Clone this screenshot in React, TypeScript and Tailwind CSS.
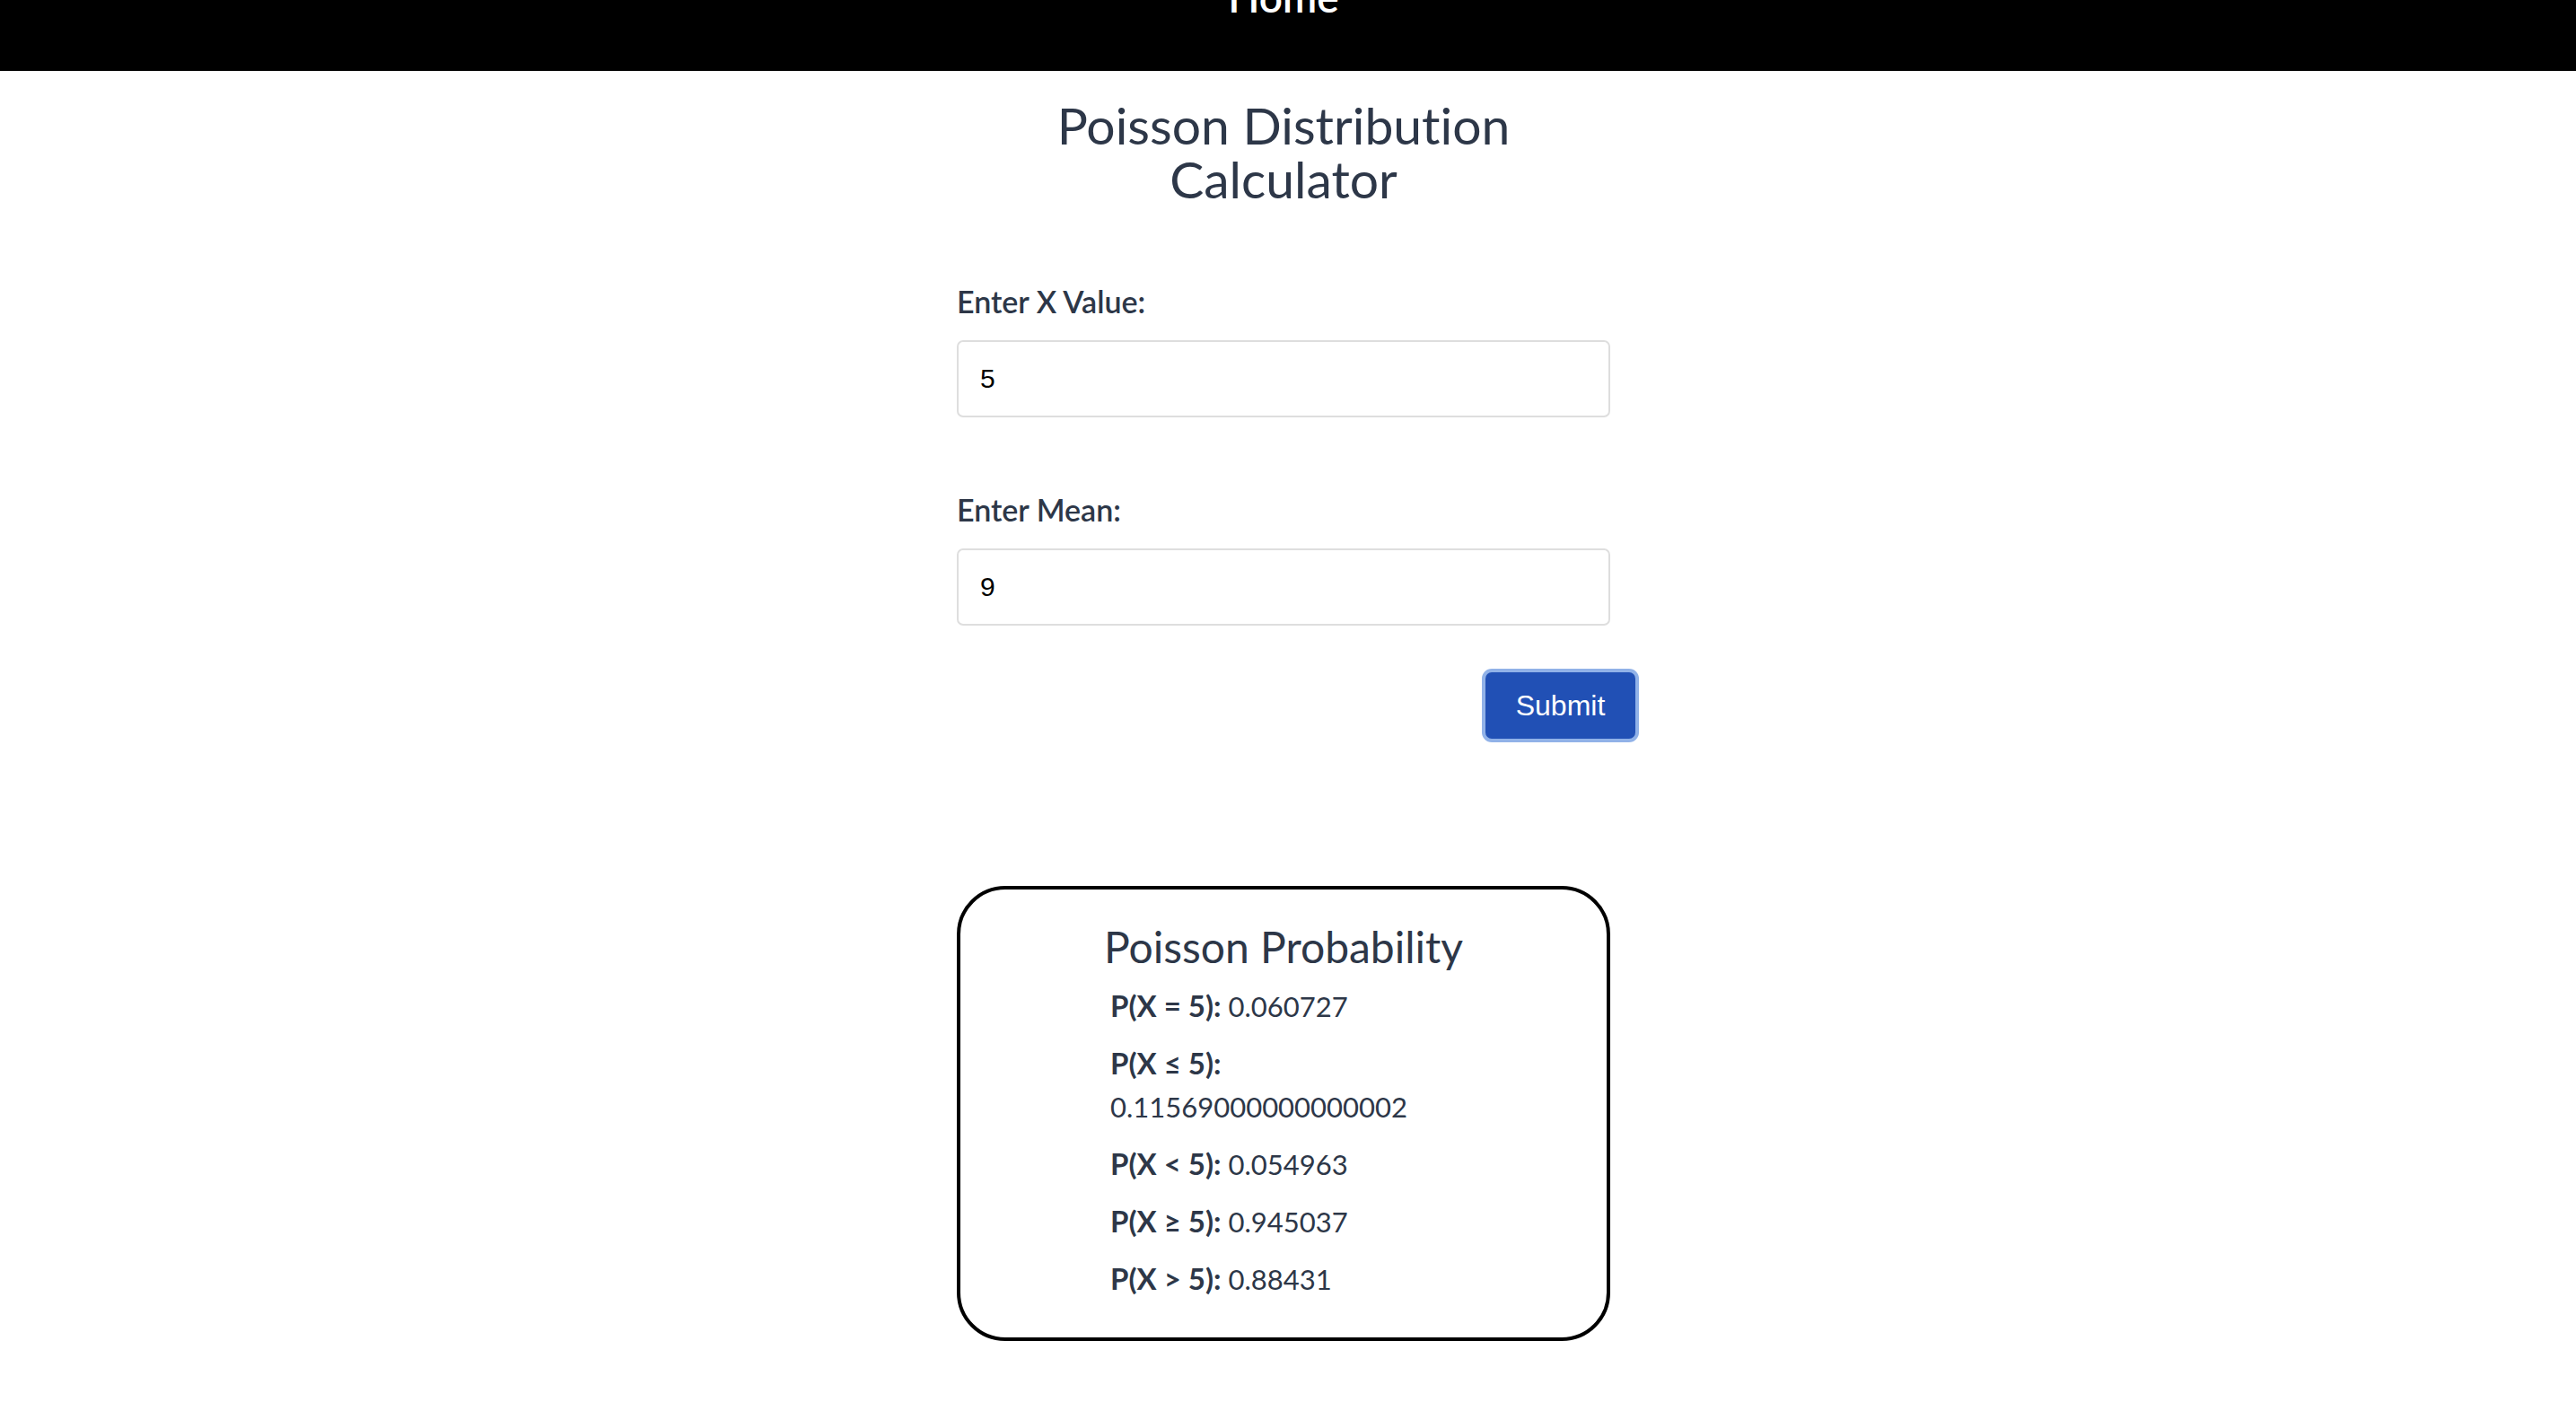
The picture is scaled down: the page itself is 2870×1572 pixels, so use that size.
import React, { useState } from "react";

const rows: { label: string; value: string }[] = [
  { label: "P(X = 5):", value: "0.060727" },
  { label: "P(X ≤ 5):", value: "0.11569000000000002" },
  { label: "P(X < 5):", value: "0.054963" },
  { label: "P(X ≥ 5):", value: "0.945037" },
  { label: "P(X > 5):", value: "0.88431" },
];

function Field({
  id,
  label,
  value,
  onChange,
  className,
}: {
  id: string;
  label: string;
  value: string;
  onChange: (v: string) => void;
  className?: string;
}) {
  return (
    <div className={className}>
      <label htmlFor={id} className="block text-[34px] leading-[38px] font-semibold text-[#2d3748]">
        {label}
      </label>
      <input
        id={id}
        value={value}
        onChange={(e) => onChange(e.target.value)}
        className="mt-[24px] block h-[86px] w-full rounded-[7px] border-2 border-[#dedede] bg-white px-[24px] font-['Liberation_Sans',Arial,sans-serif] text-[30px] text-black outline-none"
      />
    </div>
  );
}

export default function App() {
  const [x, setX] = useState("5");
  const [mean, setMean] = useState("9");

  return (
    <div className="min-h-screen bg-white font-['Lato','Noto_Sans',sans-serif] text-[#2d3748] [font-variant-ligatures:none]">
      <nav className="flex h-[79px] justify-center overflow-hidden bg-black pr-[10px]">
        <a href="#" className="-mt-[26px] text-[46px] leading-none font-semibold text-white">
          Home
        </a>
      </nav>

      <main className="flex flex-col items-center pr-[10px] pb-[80px]">
        <div className="w-[728px]">
          <h1 className="mt-[30px] text-center text-[57px] leading-[60px] font-normal">
            Poisson Distribution Calculator
          </h1>

          <form className="mt-[88px]" onSubmit={(e) => e.preventDefault()}>
            <Field id="x" label="Enter X Value:" value={x} onChange={setX} />
            <Field id="mean" label="Enter Mean:" value={mean} onChange={setMean} className="mt-[84px]" />
            <div className="-mr-[28px] mt-[52px] flex justify-end">
              <button
                type="submit"
                className="h-[74px] w-[167px] rounded-[7px] bg-[#2150b5] font-['Liberation_Sans',Arial,sans-serif] text-[32px] text-white ring-4 ring-[#91b2e8]"
              >
                Submit
              </button>
            </div>
          </form>

          <section className="mt-[164px] rounded-[54px] border-4 border-black pt-[37px] pb-[41px]">
            <h2 className="text-center text-[48px] leading-[53px] font-normal">Poisson Probability</h2>
            <div className="mx-auto mt-[16px] flex w-[386px] flex-col gap-[16px]">
              {rows.map((r) => (
                <p key={r.label} className="text-[31px] leading-[48px]">
                  <span className="text-[33px] leading-[40px] font-bold">{r.label}</span> {r.value}
                </p>
              ))}
            </div>
          </section>
        </div>
      </main>
    </div>
  );
}
